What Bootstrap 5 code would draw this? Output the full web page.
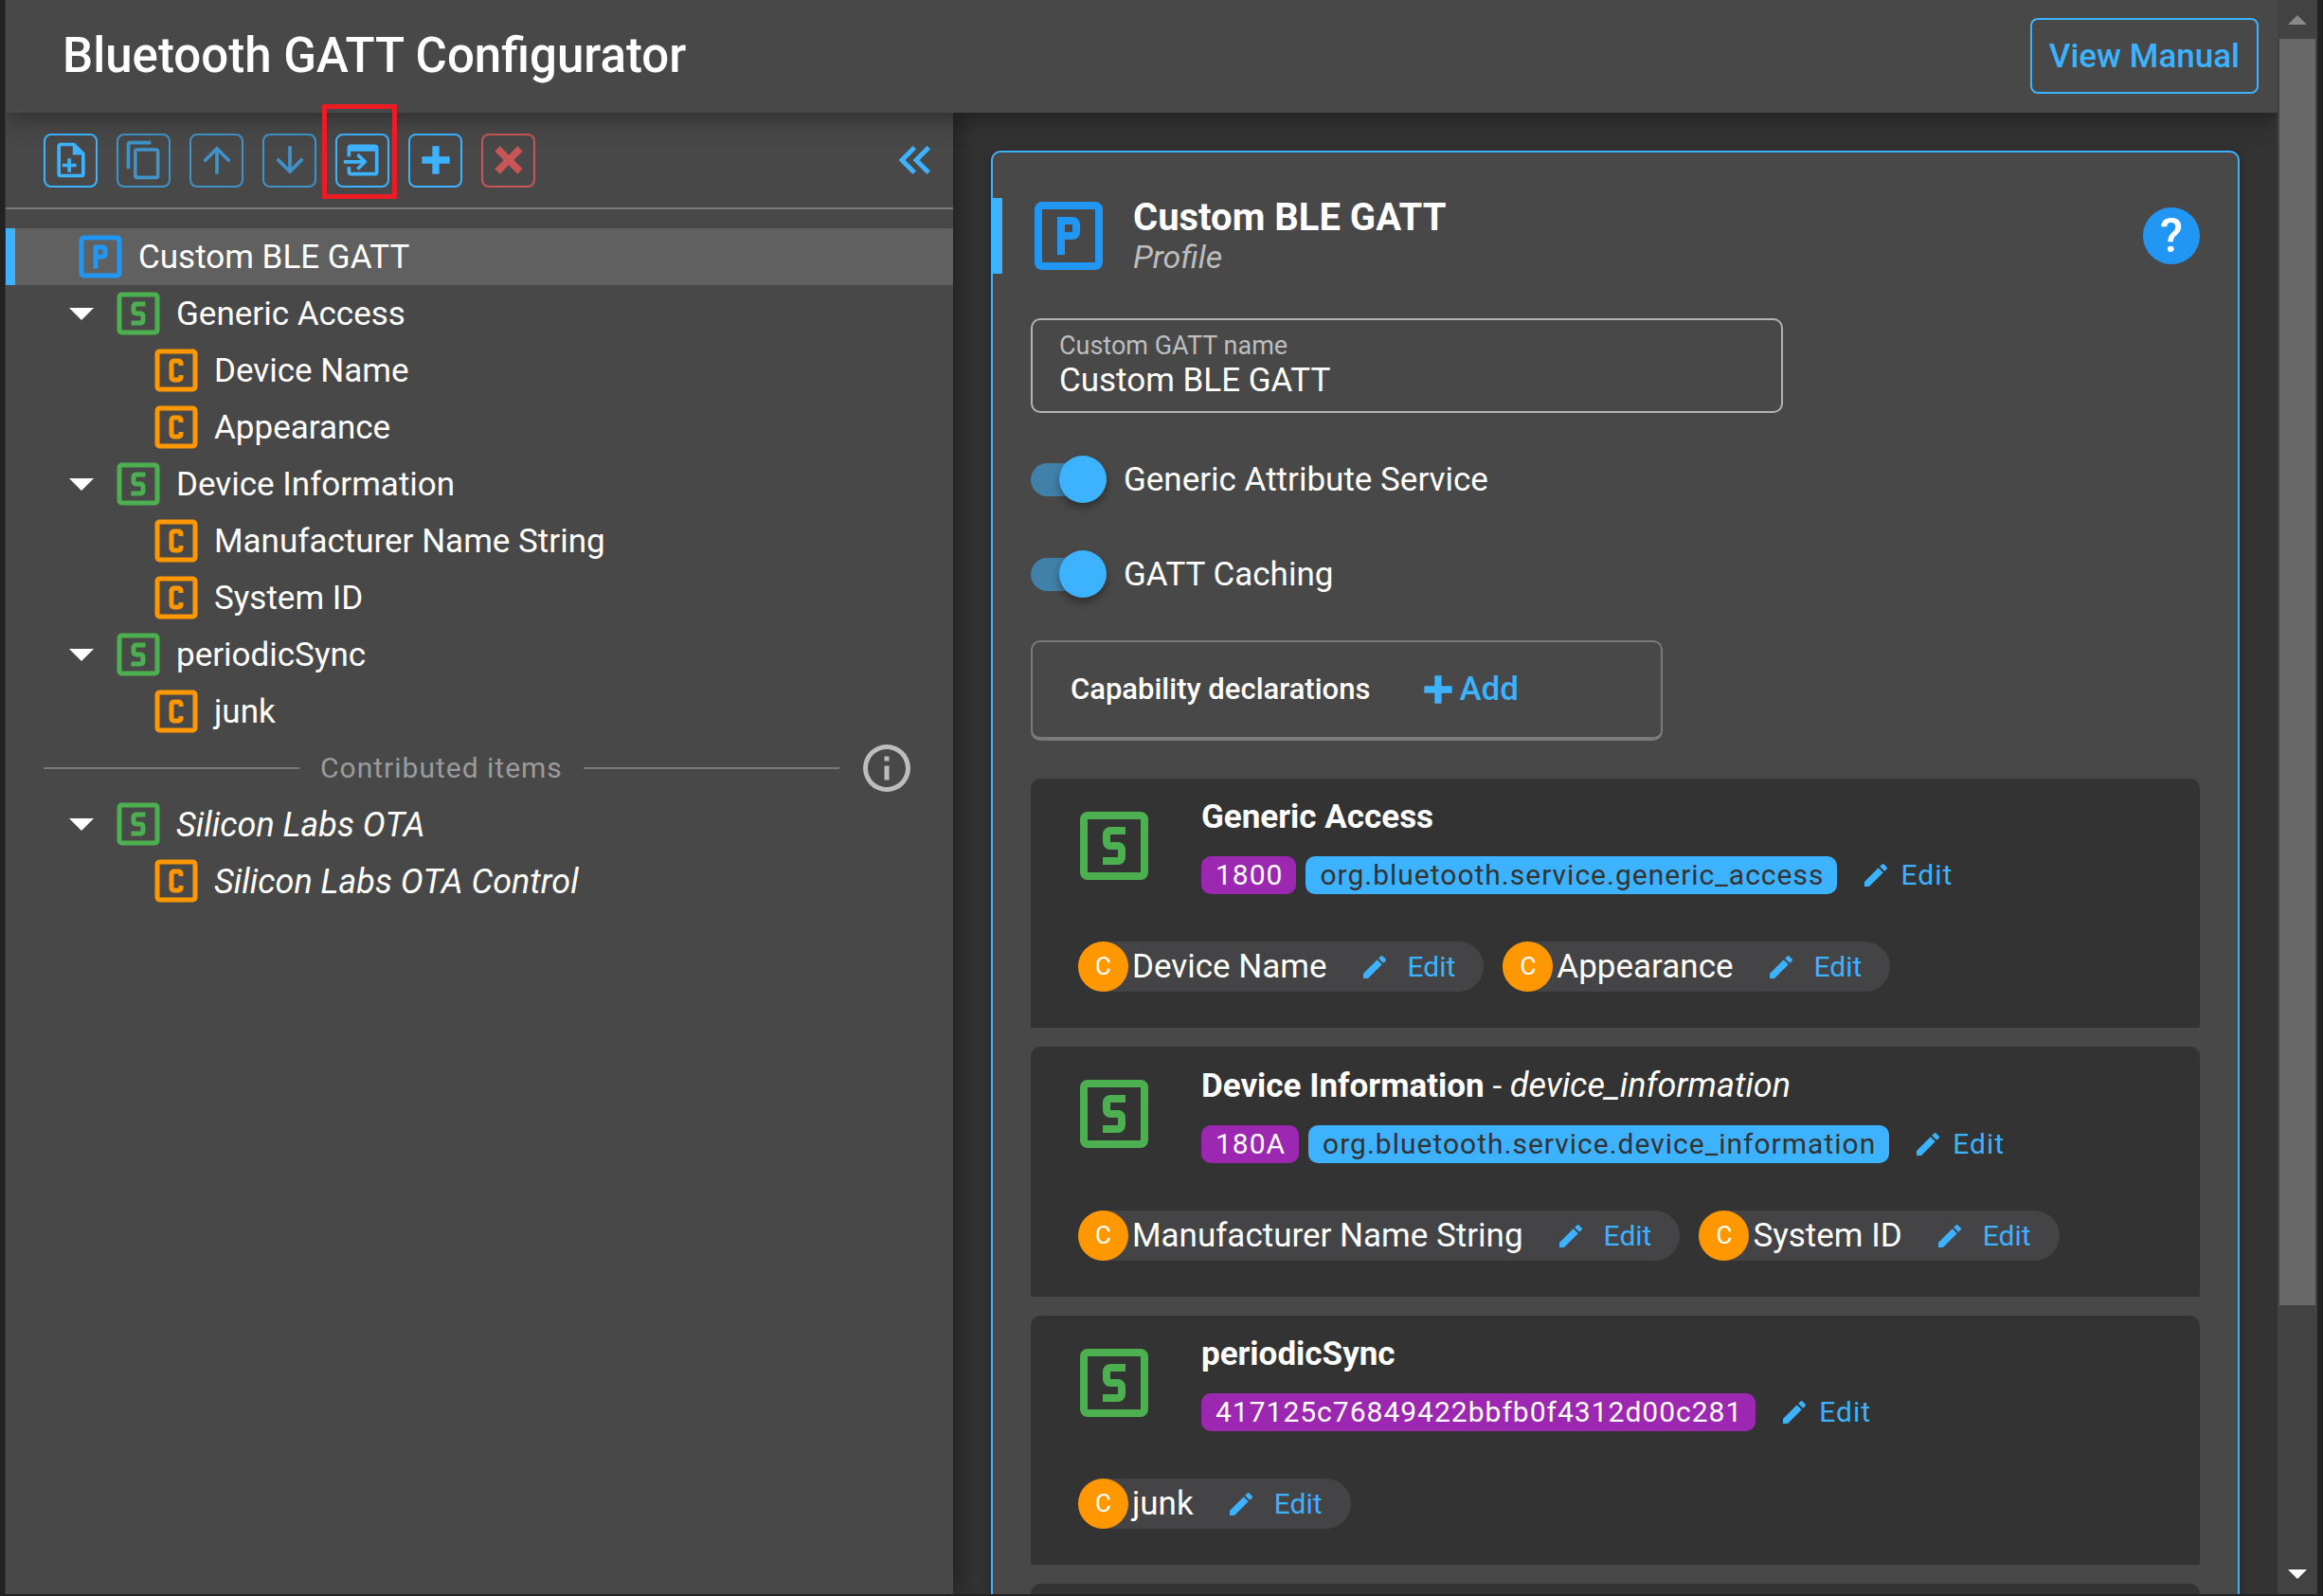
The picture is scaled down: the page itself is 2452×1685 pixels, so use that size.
<!DOCTYPE html>
<html lang="en" data-bs-theme="dark">
<head>
<meta charset="utf-8">
<meta name="viewport" content="width=device-width, initial-scale=1">
<title>Bluetooth GATT Configurator</title>
<link rel="stylesheet" href="https://cdn.jsdelivr.net/npm/bootstrap@5.3.0/dist/css/bootstrap.min.css">
<style>
:root { --accent: #3db3ff; --surface: #484848; --page: #333333; --line: #7a7a7a; --edge: #222222; }
body { font-family: Roboto, "Liberation Sans", sans-serif; font-size: 35px; line-height: 44px; color: #fff; background: var(--page); }
a { color: inherit; text-decoration: none; }
svg { display: block; flex: none; fill: currentColor; }
.shell { border-left: 5px solid var(--edge); border-right: 6px solid var(--edge); border-bottom: 2px solid var(--edge); padding-left: 1px; background: var(--page); }
.i-32 { width: 32px; height: 32px; }
.i-44 { width: 44px; height: 44px; }
.i-60 { width: 60px; height: 60px; }
.i-96 { width: 96px; height: 96px; }
.c-profile { color: #2196f3; }
.c-service { color: #4caf50; }
.c-char { color: #ff9800; }
.c-accent { color: var(--accent); }
.oblique { font-size: 36px; font-style: italic; }
.tracked { font-size: 30px; letter-spacing: 1px; }

.topbar { height: 119px; padding: 0 20px 2px 60px; background: var(--surface); box-shadow: 0 5px 25px rgba(0,0,0,.4); z-index: 3; }
.topbar h1 { font-size: 51px; line-height: 60px; font-weight: 500; }
.btn-manual { height: 80px; padding: 2px 18px 0; font-size: 35px; line-height: 44px; font-weight: 500; color: var(--accent); border: 2px solid var(--accent); border-radius: 8px; }

.workspace { min-height: 0; }
.sidebar { width: 41.7%; background: var(--surface); box-shadow: 5px 0 25px rgba(0,0,0,.4); }
.tools { height: 102px; padding: 0 10px 0 40px; gap: 20px; border-bottom: 2px solid var(--line); }
.btn-tool { width: 57px; height: 57px; padding: 0; color: var(--accent); border: 2px solid currentColor; border-radius: 8px; display: flex; align-items: center; justify-content: center; }
.btn-tool:disabled { color: var(--accent); border-color: currentColor; opacity: .7; }
.btn-tool.danger:disabled { color: #ff5c5c; }
.outlined-mark { position: absolute; inset: -31px -8px -12px -14px; z-index: 4; border: 5px solid #ed1c24; pointer-events: none; }
.tree { padding-top: 20px; }
.tree-row { height: 60px; }
.tree-row svg + span { margin-left: 10px; padding-top: 2px; }
.lvl-0 { padding-left: 70px; }
.lvl-1 { padding-left: 67px; }
.lvl-2 { padding-left: 150px; }
.tree-row.selected { background: #606060; box-shadow: inset 10px 0 var(--accent); }
.caret { width: 26px; height: 13px; margin-right: 17px; }
.divider { height: 59px; padding: 0 40px; gap: 22px; color: #9b9b9b; }
.divider hr { height: 2px; border: 0; margin: 0; background: var(--line); opacity: 1; }
.info { color: #bdbdbd; margin-left: -2px; }

.panel { margin: 40px 40px 0; padding-top: 48px; border: 2px solid var(--accent); border-bottom: 0; border-radius: 10px 10px 0 0; background: var(--surface); box-shadow: 0 2px 12px rgba(0,0,0,.35); }
.panel-head { height: 80px; padding-right: 40px; }
.panel-bar { width: 10px; height: 80px; margin-right: 22px; background: var(--accent); }
.panel-head h2 { font-size: 40px; line-height: 44px; font-weight: 700; }
.subtitle { font-size: 34px; line-height: 38px; font-style: italic; color: #bdbdbd; }
.help { width: 60px; height: 60px; border-radius: 50%; background: #2196f3; color: #fff; border: 0; font-size: 50px; line-height: 60px; font-weight: 500; padding: 0; }
.panel-body { padding: 47px 40px 0; }
.field { width: 794px; height: 100px; padding: 12px 28px 0; border: 2px solid #b3b3b3; border-radius: 10px; }
.field label { font-size: 27px; line-height: 30px; color: #bdbdbd; }
.field input { height: 44px; padding: 0; border: 0; background: transparent; color: #fff; font-size: 35px; line-height: 44px; outline: 0; }
.toggles { gap: 50px; margin: 45px 0; }
.toggle-row { height: 50px; gap: 18px; }
.toggle-row label { padding-top: 2px; }
.toggle { appearance: none; position: relative; width: 80px; height: 50px; margin: 0; flex: none; }
.toggle::before { content: ""; position: absolute; inset: 8px 8px 7px 0; border-radius: 18px; background: #4180a8; }
.toggle::after { content: ""; position: absolute; width: 50px; height: 50px; right: 0; border-radius: 50%; background: var(--accent); box-shadow: 0 5px 9px rgba(0,0,0,.35); }
.caps { width: 667px; height: 106px; margin-bottom: 40px; padding: 0 40px; border: 2px solid var(--line); border-bottom-width: 4px; border-radius: 10px; }
.caps h3 { font-size: 31px; line-height: 44px; font-weight: 500; }
.btn-add { padding: 0; margin-left: 50px; border: 0; color: var(--accent); font-size: 35px; line-height: 44px; font-weight: 500; }
.service { padding: 18px 40px 38px; margin-bottom: 20px; border-radius: 10px 10px 0 0; background: var(--page); }
.service-top { gap: 44px; }
.service-top > svg { margin-top: 5px; }
.service h3 { font-size: 35px; line-height: 44px; font-weight: 700; margin: 0 0 19px; padding-top: 1px; }
.tag-row { gap: 10px; line-height: 40px; }
.tag { height: 40px; padding: 0 14px 0 15px; border-radius: 10px; }
.tag-uuid { background: #9c27b0; }
.tag-id { background: var(--accent); color: #333; }
.edit { color: var(--accent); gap: 10px; margin-left: 15px; }
.chips { margin: 50px 0 0 10px; gap: 20px; }
.chip { height: 53px; padding-right: 30px; border-radius: 27px; background: #444446; }
.chip b { width: 53px; height: 53px; margin-right: 4px; border-radius: 50%; background: #ff9800; font-size: 26px; line-height: 52px; font-weight: 400; text-align: center; }
.chip .edit { font-size: 30px; gap: 19px; margin-left: 34px; }

.scroller { width: 42px; padding: 16px 2px; background: #424242; }
.scroller svg { width: 20px; height: 10px; align-self: center; }
.scroller .disabled { color: #888; }
.thumb { width: 38px; height: 81%; flex: none; margin: 15px 0 auto; background: #686868; }
</style>
<script src="https://cdn.jsdelivr.net/npm/bootstrap@5.3.0/dist/js/bootstrap.bundle.min.js"></script>
</head>
<body class="vh-100 overflow-hidden">
<svg class="d-none" aria-hidden="true">
  <symbol id="i-p" viewBox="0 0 24 24"><path d="M9,7V17H11V13H13A2,2 0 0,0 15,11V9A2,2 0 0,0 13,7H9M11,9H13V11H11V9M5,3H19A2,2 0 0,1 21,5V19A2,2 0 0,1 19,21H5A2,2 0 0,1 3,19V5A2,2 0 0,1 5,3M5,5V19H19V5H5Z"/></symbol>
  <symbol id="i-s" viewBox="0 0 24 24"><path d="M11,7A2,2 0 0,0 9,9V11A2,2 0 0,0 11,13H13V15H9V17H13A2,2 0 0,0 15,15V13A2,2 0 0,0 13,11H11V9H15V7H11M5,3H19A2,2 0 0,1 21,5V19A2,2 0 0,1 19,21H5A2,2 0 0,1 3,19V5A2,2 0 0,1 5,3M5,5V19H19V5H5Z"/></symbol>
  <symbol id="i-c" viewBox="0 0 24 24"><path d="M11,7A2,2 0 0,0 9,9V15A2,2 0 0,0 11,17H13A2,2 0 0,0 15,15V14H13V15H11V9H13V10H15V9A2,2 0 0,0 13,7H11M5,3H19A2,2 0 0,1 21,5V19A2,2 0 0,1 19,21H5A2,2 0 0,1 3,19V5A2,2 0 0,1 5,3M5,5V19H19V5H5Z"/></symbol>
  <symbol id="i-pencil" viewBox="0 0 24 24"><path d="M20.71,7.04C21.1,6.65 21.1,6 20.71,5.63L18.37,3.29C18,2.9 17.35,2.9 16.96,3.29L15.12,5.12L18.87,8.87M3,17.25V21H6.75L17.81,9.93L14.06,6.18L3,17.25Z"/></symbol>
  <symbol id="i-plus" viewBox="0 0 24 24"><path d="M20 14H14V20H10V14H4V10H10V4H14V10H20V14Z"/></symbol>
  <symbol id="i-down" viewBox="0 0 20 10"><path d="M0 0H20L10 10Z"/></symbol>
</svg>
<div class="shell d-flex h-100">
  <div class="d-flex flex-column flex-grow-1 overflow-hidden">
    <header class="topbar d-flex align-items-center justify-content-between position-relative flex-shrink-0">
      <h1 class="mb-0">Bluetooth GATT Configurator</h1>
      <button type="button" class="btn btn-manual">View Manual</button>
    </header>
    <div class="workspace d-flex flex-grow-1">
      <nav class="sidebar position-relative flex-shrink-0" aria-label="GATT tree">
        <div class="tools d-flex align-items-center">
          <button type="button" class="btn btn-tool" aria-label="New item"><svg class="i-44" viewBox="0 0 24 24"><path d="M14,2H6A2,2 0 0,0 4,4V20A2,2 0 0,0 6,22H18A2,2 0 0,0 20,20V8L14,2M18,20H6V4H13V9H18V20M10,11V14H7V16H10V19H12V16H15V14H12V11Z"/></svg></button>
          <button type="button" class="btn btn-tool" disabled aria-label="Duplicate"><svg class="i-44" viewBox="0 0 24 24"><path d="M19,21H8V7H19M19,5H8A2,2 0 0,0 6,7V21A2,2 0 0,0 8,23H19A2,2 0 0,0 21,21V7A2,2 0 0,0 19,5M16,1H4A2,2 0 0,0 2,3V17H4V3H16V1Z"/></svg></button>
          <button type="button" class="btn btn-tool" disabled aria-label="Move up"><svg class="i-44" viewBox="0 0 24 24"><path d="M4 12l1.41 1.41L11 7.83V20h2V7.83l5.58 5.59L20 12l-8-8-8 8z"/></svg></button>
          <button type="button" class="btn btn-tool" disabled aria-label="Move down"><svg class="i-44" viewBox="0 0 24 24"><path d="M20 12l-1.41-1.41L13 16.17V4h-2v12.17l-5.58-5.59L4 12l8 8 8-8z"/></svg></button>
          <div class="position-relative">
            <button type="button" class="btn btn-tool" aria-label="Import"><svg class="i-44" viewBox="0 0 24 24"><path d="M1,12H10.76L8.26,9.5L9.67,8.08L14.59,13L9.67,17.92L8.26,16.5L10.76,14H1V12M19,3C20.11,3 21,3.9 21,5V19A2,2 0 0,1 19,21H5C3.89,21 3,20.11 3,19V16H5V19H19V7H5V10H3V5A2,2 0 0,1 5,3H19Z"/></svg></button>
            <div class="outlined-mark"></div>
          </div>
          <button type="button" class="btn btn-tool" aria-label="Add"><svg class="i-44"><use href="#i-plus"/></svg></button>
          <button type="button" class="btn btn-tool danger" disabled aria-label="Delete"><svg class="i-44" viewBox="0 0 24 24"><path d="M20 6.91L17.09 4L12 9.09L6.91 4L4 6.91L9.09 12L4 17.09L6.91 20L12 14.91L17.09 20L20 17.09L14.91 12L20 6.91Z"/></svg></button>
          <button type="button" class="btn p-0 border-0 ms-auto c-accent" aria-label="Collapse"><svg class="i-60" viewBox="0 0 24 24"><path d="M18.41,7.41L17,6L11,12L17,18L18.41,16.59L13.83,12L18.41,7.41M12.41,7.41L11,6L5,12L11,18L12.41,16.59L7.83,12L12.41,7.41Z"/></svg></button>
        </div>
        <div class="tree d-flex flex-column">
          <a href="#" class="tree-row selected lvl-0 d-flex align-items-center"><svg class="i-60 c-profile"><use href="#i-p"/></svg><span>Custom BLE GATT</span></a>
          <a href="#" class="tree-row lvl-1 d-flex align-items-center"><svg class="caret"><use href="#i-down"/></svg><svg class="i-60 c-service"><use href="#i-s"/></svg><span>Generic Access</span></a>
          <a href="#" class="tree-row lvl-2 d-flex align-items-center"><svg class="i-60 c-char"><use href="#i-c"/></svg><span>Device Name</span></a>
          <a href="#" class="tree-row lvl-2 d-flex align-items-center"><svg class="i-60 c-char"><use href="#i-c"/></svg><span>Appearance</span></a>
          <a href="#" class="tree-row lvl-1 d-flex align-items-center"><svg class="caret"><use href="#i-down"/></svg><svg class="i-60 c-service"><use href="#i-s"/></svg><span>Device Information</span></a>
          <a href="#" class="tree-row lvl-2 d-flex align-items-center"><svg class="i-60 c-char"><use href="#i-c"/></svg><span>Manufacturer Name String</span></a>
          <a href="#" class="tree-row lvl-2 d-flex align-items-center"><svg class="i-60 c-char"><use href="#i-c"/></svg><span>System ID</span></a>
          <a href="#" class="tree-row lvl-1 d-flex align-items-center"><svg class="caret"><use href="#i-down"/></svg><svg class="i-60 c-service"><use href="#i-s"/></svg><span>periodicSync</span></a>
          <a href="#" class="tree-row lvl-2 d-flex align-items-center"><svg class="i-60 c-char"><use href="#i-c"/></svg><span>junk</span></a>
          <div class="divider d-flex align-items-center">
            <hr class="flex-grow-1"><span class="tracked">Contributed items</span><hr class="flex-grow-1">
            <svg class="i-60 info" viewBox="0 0 24 24"><path d="M11,9H13V7H11M12,20C7.59,20 4,16.41 4,12C4,7.59 7.59,4 12,4C16.41,4 20,7.59 20,12C20,16.41 16.41,20 12,20M12,2A10,10 0 1,0 12,22A10,10 0 1,0 12,2M11,17H13V11H11V17Z"/></svg>
          </div>
          <a href="#" class="tree-row lvl-1 d-flex align-items-center"><svg class="caret"><use href="#i-down"/></svg><svg class="i-60 c-service"><use href="#i-s"/></svg><span class="oblique">Silicon Labs OTA</span></a>
          <a href="#" class="tree-row lvl-2 d-flex align-items-center"><svg class="i-60 c-char"><use href="#i-c"/></svg><span class="oblique">Silicon Labs OTA Control</span></a>
        </div>
      </nav>
      <main class="flex-grow-1 overflow-hidden">
        <section class="panel">
          <div class="panel-head d-flex align-items-center">
            <div class="panel-bar"></div>
            <svg class="i-96 c-profile"><use href="#i-p"/></svg>
            <div class="flex-grow-1 ps-3 ms-1">
              <h2 class="mb-0">Custom BLE GATT</h2>
              <div class="subtitle">Profile</div>
            </div>
            <button type="button" class="help" aria-label="Help">?</button>
          </div>
          <div class="panel-body">
            <div class="field d-flex flex-column">
              <label for="gatt-name">Custom GATT name</label>
              <input id="gatt-name" type="text" value="Custom BLE GATT">
            </div>
            <div class="toggles d-flex flex-column">
              <div class="toggle-row d-flex align-items-center"><input class="toggle" type="checkbox" role="switch" id="gas" checked><label for="gas">Generic Attribute Service</label></div>
              <div class="toggle-row d-flex align-items-center"><input class="toggle" type="checkbox" role="switch" id="cache" checked><label for="cache">GATT Caching</label></div>
            </div>
            <div class="caps d-flex align-items-center">
              <h3 class="mb-0">Capability declarations</h3>
              <button type="button" class="btn btn-add d-flex align-items-center"><svg class="i-44"><use href="#i-plus"/></svg>Add</button>
            </div>
            <article class="service">
              <div class="service-top d-flex align-items-start">
                <svg class="i-96 c-service"><use href="#i-s"/></svg>
                <div class="d-flex flex-column">
                  <h3>Generic Access</h3>
                  <div class="d-flex align-items-center tag-row tracked"><span class="tag tag-uuid">1800</span><span class="tag tag-id">org.bluetooth.service.generic_access</span><a href="#" class="edit d-flex align-items-center"><svg class="i-32"><use href="#i-pencil"/></svg>Edit</a></div>
                </div>
              </div>
              <div class="chips d-flex">
                <div class="chip d-flex align-items-center"><b>C</b>Device Name<a href="#" class="edit d-flex align-items-center"><svg class="i-32"><use href="#i-pencil"/></svg>Edit</a></div>
                <div class="chip d-flex align-items-center"><b>C</b>Appearance<a href="#" class="edit d-flex align-items-center"><svg class="i-32"><use href="#i-pencil"/></svg>Edit</a></div>
              </div>
            </article>
            <article class="service">
              <div class="service-top d-flex align-items-start">
                <svg class="i-96 c-service"><use href="#i-s"/></svg>
                <div class="d-flex flex-column">
                  <h3>Device Information <span class="fw-normal">- <span class="oblique">device_information</span></span></h3>
                  <div class="d-flex align-items-center tag-row tracked"><span class="tag tag-uuid">180A</span><span class="tag tag-id">org.bluetooth.service.device_information</span><a href="#" class="edit d-flex align-items-center"><svg class="i-32"><use href="#i-pencil"/></svg>Edit</a></div>
                </div>
              </div>
              <div class="chips d-flex">
                <div class="chip d-flex align-items-center"><b>C</b>Manufacturer Name String<a href="#" class="edit d-flex align-items-center"><svg class="i-32"><use href="#i-pencil"/></svg>Edit</a></div>
                <div class="chip d-flex align-items-center"><b>C</b>System ID<a href="#" class="edit d-flex align-items-center"><svg class="i-32"><use href="#i-pencil"/></svg>Edit</a></div>
              </div>
            </article>
            <article class="service">
              <div class="service-top d-flex align-items-start">
                <svg class="i-96 c-service"><use href="#i-s"/></svg>
                <div class="d-flex flex-column">
                  <h3>periodicSync</h3>
                  <div class="d-flex align-items-center tag-row tracked"><span class="tag tag-uuid">417125c76849422bbfb0f4312d00c281</span><a href="#" class="edit d-flex align-items-center"><svg class="i-32"><use href="#i-pencil"/></svg>Edit</a></div>
                </div>
              </div>
              <div class="chips d-flex">
                <div class="chip d-flex align-items-center"><b>C</b>junk<a href="#" class="edit d-flex align-items-center"><svg class="i-32"><use href="#i-pencil"/></svg>Edit</a></div>
              </div>
            </article>
            <article class="service" aria-hidden="true"></article>
          </div>
        </section>
      </main>
    </div>
  </div>
  <div class="scroller d-flex flex-column flex-shrink-0">
    <svg class="disabled" viewBox="0 0 20 10"><path d="M0 10H20L10 0Z"/></svg>
    <div class="thumb"></div>
    <svg><use href="#i-down"/></svg>
  </div>
</div>
</body>
</html>
